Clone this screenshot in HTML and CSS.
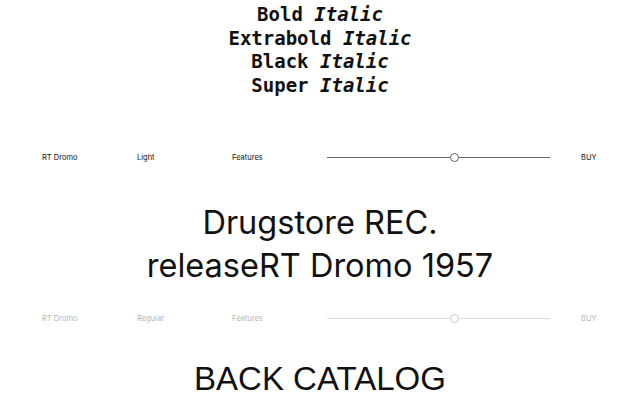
FILE: index.html
```html
<!DOCTYPE html>
<html>
<head>
<meta charset="utf-8">
<link rel="stylesheet" href="styles.css">
</head>
<body>
<div class="styles">
  <div class="style-line">Bold <em>Italic</em></div>
  <div class="style-line">Extrabold <em>Italic</em></div>
  <div class="style-line">Black <em>Italic</em></div>
  <div class="style-line">Super <em>Italic</em></div>
</div>

<div class="tester first">
  <div class="row">
    <span class="cell">RT Dromo</span>
    <span class="cell">Light</span>
    <span class="cell">Features</span>
    <div class="slider"><span class="knob"></span></div>
    <span class="buy">BUY</span>
  </div>
  <div class="sample">Drugstore REC.<br>releaseRT Dromo 1957</div>
</div>

<div class="tester muted">
  <div class="row">
    <span class="cell">RT Dromo</span>
    <span class="cell">Regular</span>
    <span class="cell">Features</span>
    <div class="slider"><span class="knob"></span></div>
    <span class="buy">BUY</span>
  </div>
  <div class="sample catalog">BACK CATALOG</div>
</div>
</body>
</html>
```
FILE: styles.css
```css
html, body {
  margin: 0;
  padding: 0;
  background: #fff;
  color: #111;
  overflow: hidden;
}
body {
  width: 640px;
  height: 400px;
  font-family: "Inter", "Liberation Sans", sans-serif;
}
.styles {
  padding-top: 3px;
  text-align: center;
  font-family: "DejaVu Sans Mono", "Liberation Mono", monospace;
  font-weight: bold;
  font-size: 19px;
  line-height: 23.5px;
}
.styles em {
  font-style: italic;
}
.tester {
  display: flex;
  flex-direction: column;
}
.first {
  margin-top: 50px;
}
.row {
  display: grid;
  grid-template-columns: 95px 95px 95px 223px auto;
  align-items: center;
  padding-left: 42px;
  height: 20px;
  font-size: 7.5px;
  color: #111;
}
.slider {
  position: relative;
  height: 1px;
  background: #666;
}
.knob {
  position: absolute;
  left: 123px;
  top: -4px;
  width: 7px;
  height: 7px;
  border: 1px solid #666;
  border-radius: 50%;
  background: #fff;
}
.buy {
  padding-left: 31px;
}
.sample {
  padding-top: 34px;
  text-align: center;
  font-size: 32.5px;
  line-height: 43px;
  color: #111;
}
.muted {
  margin-top: 21px;
}
.muted .row { color: #b5b5b5; }
.muted .slider { background: #ddd; }
.muted .knob { border-color: #ccc; }
.catalog {
  padding-top: 31px;
  font-family: "Liberation Sans", Arial, sans-serif;
  font-size: 33px;
  line-height: 40px;
}
```
